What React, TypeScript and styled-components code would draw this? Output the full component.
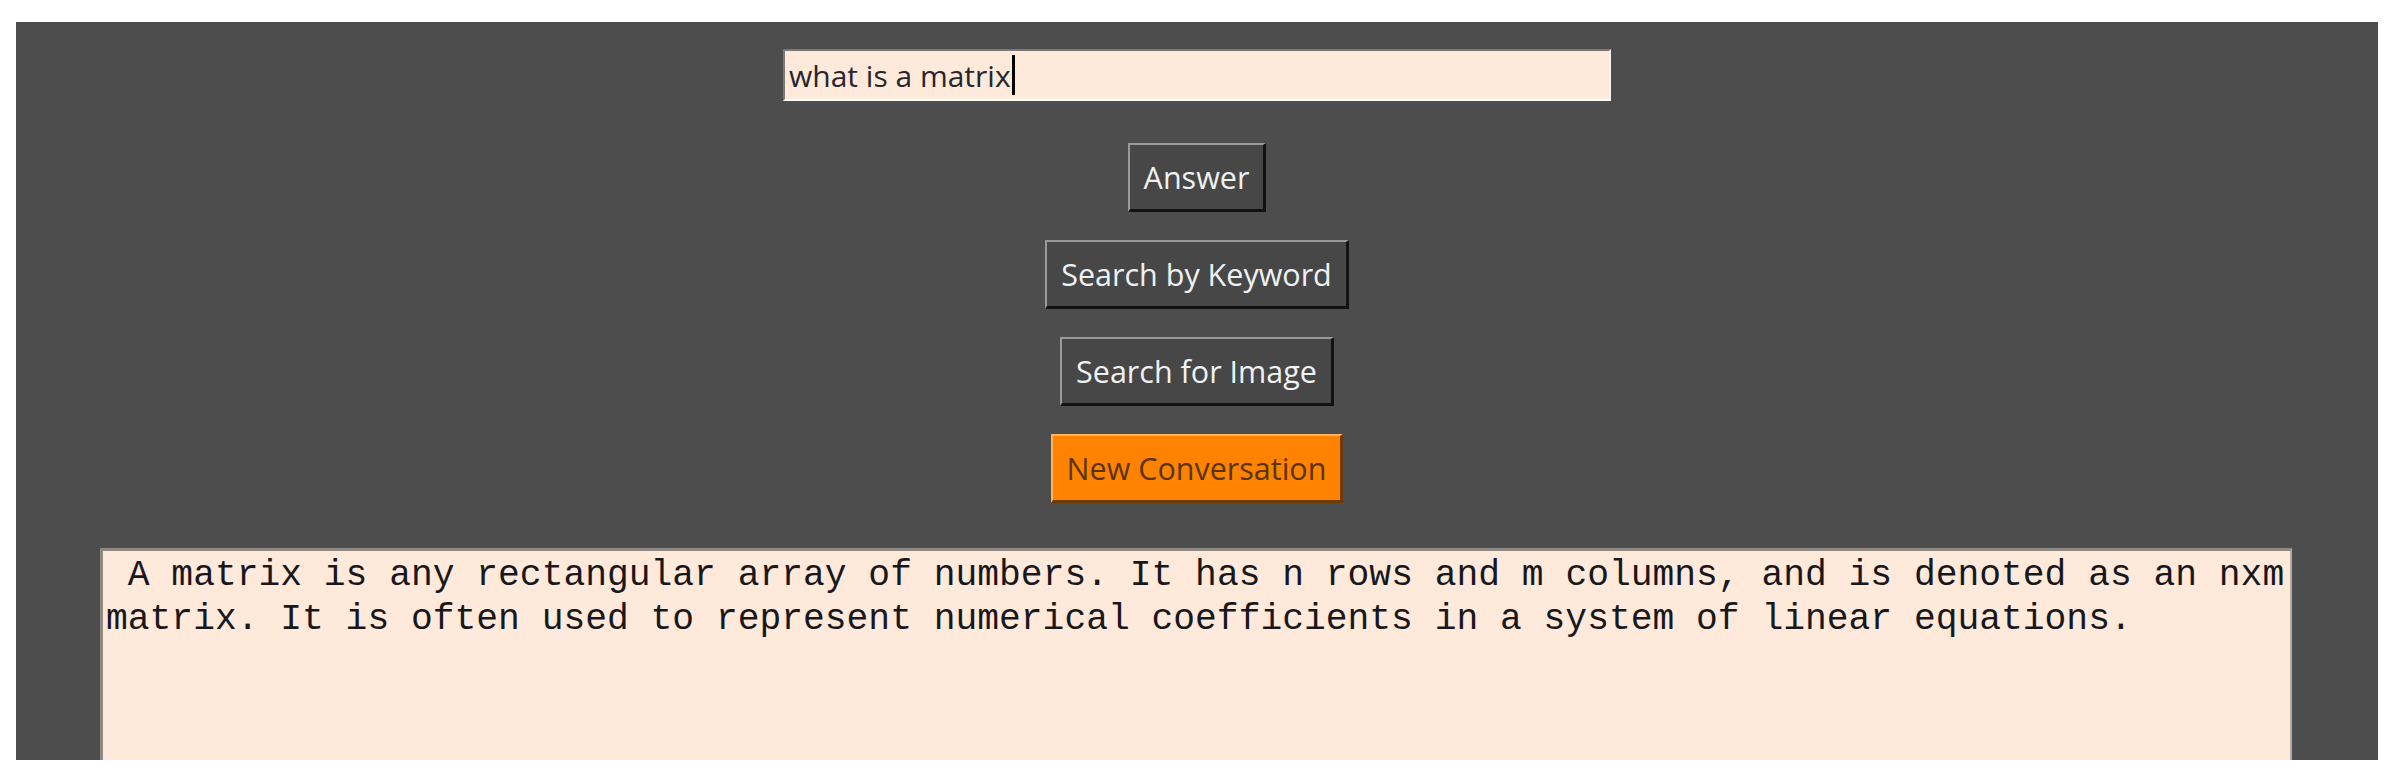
import React from "react";
import styled, { createGlobalStyle } from "styled-components";

const GlobalStyle = createGlobalStyle`
  html, body {
    margin: 0;
    padding: 0;
    background: #ffffff;
  }
  * { box-sizing: border-box; }
`;

const Page = styled.div`
  padding: 22px 26px 22px 16px;
`;

const Panel = styled.main`
  height: 738px;
  background: #4d4d4d;
  overflow: hidden;
  display: flex;
  flex-direction: column;
  align-items: center;
  padding-top: 27px;
`;

const QueryField = styled.div`
  width: 828px;
  height: 52px;
  flex-shrink: 0;
  background: #fee9da;
  border-style: solid;
  border-width: 2px;
  border-color: #7c7873 #f4f4f4 #ffffff #7c7873;
  display: flex;
  align-items: center;
  padding-left: 4px;
  font-family: "Open Sans", "Noto Sans", sans-serif;
  font-size: 30px;
  color: #26262e;
`;

const Caret = styled.span`
  display: inline-block;
  width: 3px;
  height: 40px;
  background: #000;
  margin-left: 1px;
`;

const ButtonStack = styled.div`
  margin-top: 42px;
  display: flex;
  flex-direction: column;
  align-items: center;
  gap: 28px;
`;

const ActionButton = styled.button<{ $accent?: boolean }>`
  height: 69px;
  padding: 0 14px;
  font-family: "Open Sans", "Noto Sans", sans-serif;
  font-size: 30.5px;
  line-height: 1;
  border-style: solid;
  border-width: 2px 3px 3px 2px;
  background: ${(p) => (p.$accent ? "#ff8300" : "#474747")};
  color: ${(p) => (p.$accent ? "#5a3300" : "#eef2f4")};
  border-color: ${(p) =>
    p.$accent
      ? "#ffb35c #6e3a00 #6e3a00 #ffb35c"
      : "#9a9a9a #121212 #121212 #9a9a9a"};
  cursor: pointer;
`;

const Output = styled.div`
  margin-top: 45px;
  align-self: stretch;
  margin-left: 84px;
  margin-right: 86px;
  height: 400px;
  flex-shrink: 0;
  background: #fee9da;
  border-style: solid;
  border-width: 3px 2px 0 3px;
  border-color: #8e8982 #b3aca5 #b3aca5 #8e8982;
  padding: 3px 0 0 3px;
  font-family: "Courier New", "Nimbus Mono PS", "FreeMono", "Liberation Mono", monospace;
  font-size: 36.3px;
  line-height: 44px;
  color: #18181c;
  white-space: pre-wrap;
`;

const answer =
  " A matrix is any rectangular array of numbers. It has n rows and m columns, and is denoted as an nxm matrix. It is often used to represent numerical coefficients in a system of linear equations.";

export default function App() {
  return (
    <>
      <GlobalStyle />
      <Page>
        <Panel>
          <QueryField>
            what is a matrix
            <Caret />
          </QueryField>
          <ButtonStack>
            <ActionButton>Answer</ActionButton>
            <ActionButton>Search by Keyword</ActionButton>
            <ActionButton>Search for Image</ActionButton>
            <ActionButton $accent>New Conversation</ActionButton>
          </ButtonStack>
          <Output>{answer}</Output>
        </Panel>
      </Page>
    </>
  );
}
